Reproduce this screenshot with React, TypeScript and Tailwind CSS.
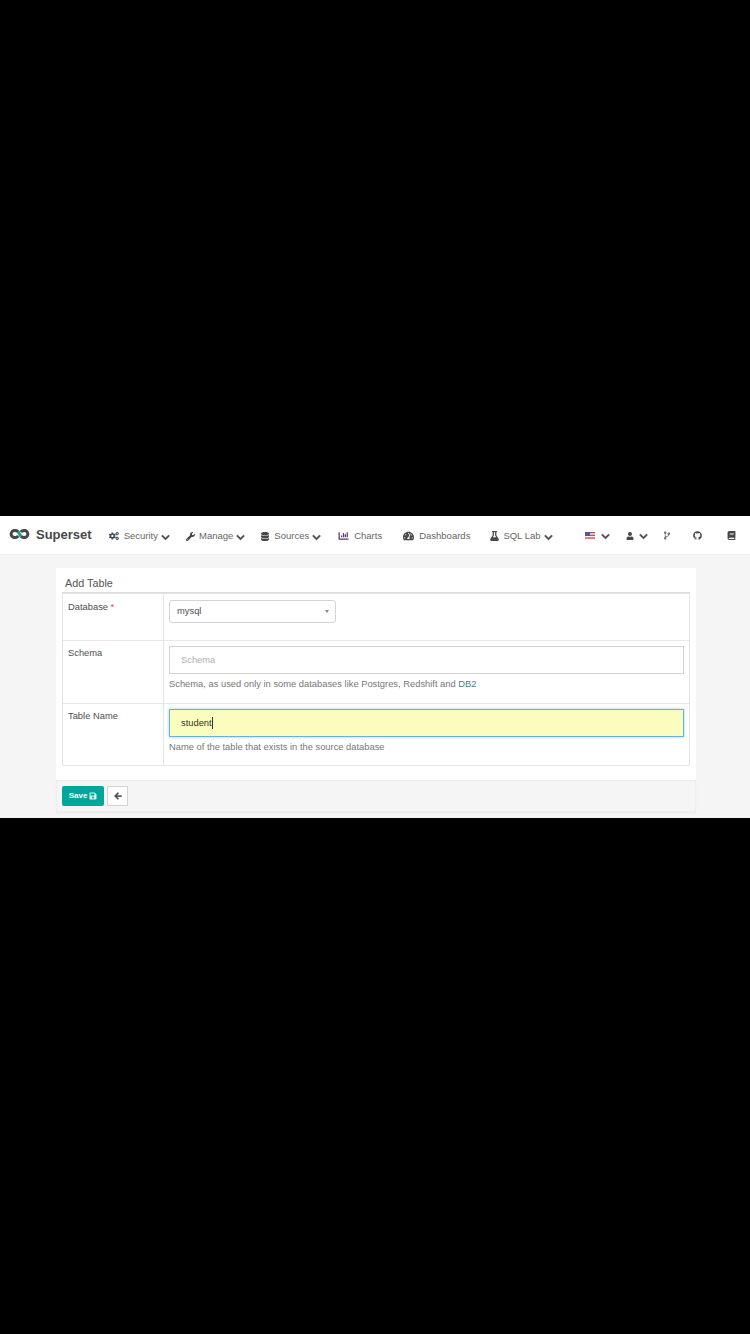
import type { ReactNode } from "react";
import { FaArrowLeft, FaBook, FaChartBar, FaChevronDown, FaCodeBranch, FaCogs, FaDatabase, FaFlask, FaGithub, FaSave, FaTachometerAlt, FaUser, FaWrench } from "react-icons/fa";

function Chevron({ className = "ml-[3px]" }: { className?: string }) {
  return <FaChevronDown stroke="currentColor" strokeWidth={30} className={`${className} mt-[2px] h-[9px] w-[9px] shrink-0 text-[#484848]`} />;
}

function NavLink({ icon, label, caret, className }: { icon: ReactNode; label: string; caret?: boolean; className: string }) {
  return (
    <div className={`mt-[2px] flex items-center ${className}`}>
      {icon}
      <span className="text-[#666666]">{label}</span>
      {caret && <Chevron />}
    </div>
  );
}

function Logo() {
  return (
    <svg width="21" height="10" viewBox="0 0 21 10" fill="none" className="mb-[2px] shrink-0">
      <path d="M9.300 2.800C8.300 1.900 7.200 1.400 5.700 1.400a3.600 3.600 0 0 0 0 7.200c1.500 0 2.600-.7 3.500-1.700" stroke="#484848" strokeWidth="3" />
      <path d="M11.800 3.100c.9-1 2-1.700 3.500-1.700a3.600 3.600 0 0 1 0 7.200c-1.500 0-2.600-.5-3.600-1.400" stroke="#484848" strokeWidth="3" />
      <path d="M9.300 2.800 11.700 7.200" stroke="#00a699" strokeWidth="3" />
    </svg>
  );
}

function Flag() {
  return (
    <svg width="10" height="8" viewBox="0 0 10 8" className="mt-[1px] shrink-0">
      <rect width="10" height="8" fill="#f3f3f6" />
      <rect y="0" width="10" height="1.300" fill="#c9485b" />
      <rect y="2.700" width="10" height="1.300" fill="#c9485b" />
      <rect y="5.400" width="10" height="1.300" fill="#c9485b" />
      <rect width="5" height="4" fill="#4a5a9c" />
    </svg>
  );
}

function Navbar() {
  return (
    <div className="flex h-[38px] items-center bg-white pl-[9px] text-[9.5px] shadow-[0_1px_0_#f0f0f0]">
      <Logo />
      <span className="ml-[6px] text-[13px] font-bold text-[#484848]">Superset</span>
      <NavLink className="ml-[17px]" icon={<FaCogs className="mr-[5px] h-[10px] w-[10px] text-[#3e4a5a]" />} label="Security" caret />
      <NavLink className="ml-[16px]" icon={<FaWrench className="mr-[4px] h-[9px] w-[9px] text-[#484848]" />} label="Manage" caret />
      <NavLink className="ml-[16px]" icon={<FaDatabase className="mr-[5px] h-[9px] w-[8px] text-[#484848]" />} label="Sources" caret />
      <NavLink className="ml-[17px]" icon={<FaChartBar className="mr-[5px] h-[10px] w-[11px] text-[#5b3a72]" />} label="Charts" />
      <NavLink className="ml-[21px]" icon={<FaTachometerAlt className="mr-[5px] h-[10px] w-[11px] text-[#484848]" />} label="Dashboards" />
      <NavLink className="ml-[20px]" icon={<FaFlask className="mr-[4px] h-[10px] w-[9px] text-[#484848]" />} label="SQL Lab" caret />
      <div className="ml-[32px] flex items-center">
        <Flag />
        <Chevron className="ml-[6px]" />
      </div>
      <div className="ml-[16px] flex items-center">
        <FaUser className="mt-[1px] h-[8px] w-[8px] text-[#484848]" />
        <Chevron className="ml-[5px]" />
      </div>
      <FaCodeBranch className="ml-[16px] mt-[1px] h-[9px] w-[6px] text-[#666666]" />
      <FaGithub className="ml-[23px] mt-[1px] h-[9px] w-[9px] text-[#484848]" />
      <FaBook className="ml-[25px] mt-[1px] h-[9px] w-[9px] text-[#484848]" />
    </div>
  );
}

function Row({ label, required, children, className, padTop }: { label: string; required?: boolean; children: ReactNode; className: string; padTop: string }) {
  return (
    <div className={`flex border-b border-[#e8e8e8] ${className}`}>
      <div className={`w-[101px] shrink-0 border-r border-[#e4e4e4] pl-[5px] ${padTop} leading-[14px] text-[#4f4f4f]`}>
        {label}
        {required && <span className="text-[#e04355]"> *</span>}
      </div>
      <div className={`min-w-0 flex-1 pl-[5px] pr-[5px] ${padTop}`}>{children}</div>
    </div>
  );
}

export default function App() {
  return (
    <div className="flex h-[1334px] flex-col bg-black font-['Liberation_Sans',Arial,sans-serif]">
      <div className="mt-[516px] h-[302px] bg-[#f5f5f5]">
        <Navbar />
        <div className="ml-[56px] mr-[54px] mt-[14px] bg-white text-[9.35px]">
          <div className="px-[6px]">
            <div className="h-[25px] border-b border-[#dddddd] pl-[3px] pt-[8px] text-[10.8px] leading-[14px] text-[#555555]">Add Table</div>
            <div className="border-x border-t border-[#e4e4e4]">
              <Row label="Database" required className="h-[47px]" padTop="pt-[6px]">
                <div className="flex h-[23px] w-[167px] items-center justify-between rounded-[3px] border border-[#d4d4d4] bg-white pl-[7px] pr-[6px] text-[#5b4a5a]">
                  <span>mysql</span>
                  <span className="h-0 w-0 border-x-[2.5px] border-t-[3px] border-x-transparent border-t-[#888888]" />
                </div>
              </Row>
              <Row label="Schema" className="h-[63px]" padTop="pt-[5px]">
                <div className="flex h-[28px] items-center border border-[#d4d4d4] bg-white pl-[11px] text-[#b0b0b0]">Schema</div>
                <div className="mt-[4px] leading-[12px] text-[#777777]">
                  Schema, as used only in some databases like Postgres, Redshift and <span className="text-[#4a7a96]">DB2</span>
                </div>
              </Row>
              <Row label="Table Name" className="h-[62px]" padTop="pt-[5px]">
                <div className="flex h-[28px] items-center border border-[#66afe9] bg-[#fafdbd] pl-[11px] text-[#333333] shadow-[0_0_3px_rgba(102,175,233,0.6)]">
                  <span className="border-r border-[#333333] leading-[12px]">student</span>
                </div>
                <div className="mt-[4px] leading-[12px] text-[#777777]">Name of the table that exists in the source database</div>
              </Row>
            </div>
          </div>
          <div className="h-[14px]" />
          <div className="flex h-[32px] items-center border border-[#eeeeee] bg-[#f5f5f5] pl-[5px] shadow-[0_1px_1px_#ebebeb]">
            <button type="button" className="flex h-[20px] w-[42px] items-center justify-center gap-[2px] rounded-[2px] bg-[#00a699] text-[8px] font-bold text-white">
              Save
              <FaSave className="h-[8px] w-[8px] text-[#d8f3f0]" />
            </button>
            <button type="button" className="ml-[3px] flex h-[20px] w-[21px] items-center justify-center border border-[#d4d4d4] bg-white">
              <FaArrowLeft stroke="currentColor" strokeWidth={30} className="h-[8px] w-[8px] text-[#484848]" />
            </button>
          </div>
        </div>
      </div>
    </div>
  );
}
